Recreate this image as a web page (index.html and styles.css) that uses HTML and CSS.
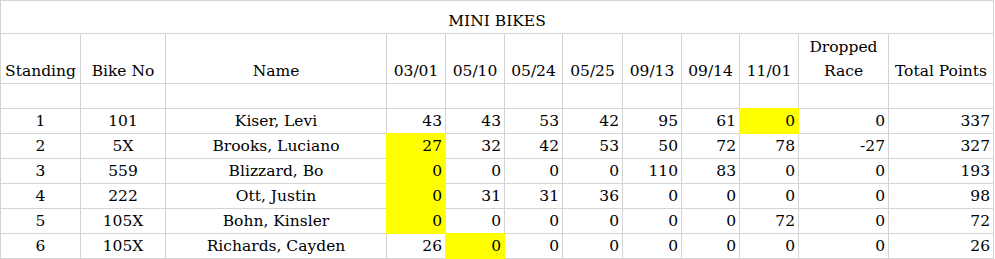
FILE: index.html
```html
<!DOCTYPE html>
<html>
<head>
<meta charset="utf-8">
<link rel="stylesheet" href="styles.css">
</head>
<body>
<div class="sheet">
  <div class="cell title">MINI BIKES</div>

  <div class="cell c">Standing</div>
  <div class="cell c">Bike No</div>
  <div class="cell c">Name</div>
  <div class="cell c">03/01</div>
  <div class="cell c">05/10</div>
  <div class="cell c">05/24</div>
  <div class="cell c">05/25</div>
  <div class="cell c">09/13</div>
  <div class="cell c">09/14</div>
  <div class="cell c">11/01</div>
  <div class="cell c">Dropped<br>Race</div>
  <div class="cell c">Total Points</div>

  <div class="cell"></div><div class="cell"></div><div class="cell"></div><div class="cell"></div>
  <div class="cell"></div><div class="cell"></div><div class="cell"></div><div class="cell"></div>
  <div class="cell"></div><div class="cell"></div><div class="cell"></div><div class="cell"></div>

  <div class="cell c">1</div><div class="cell c">101</div><div class="cell c">Kiser, Levi</div>
  <div class="cell r">43</div><div class="cell r">43</div><div class="cell r">53</div><div class="cell r">42</div>
  <div class="cell r">95</div><div class="cell r">61</div><div class="cell r hl">0</div>
  <div class="cell r">0</div><div class="cell r">337</div>

  <div class="cell c">2</div><div class="cell c">5X</div><div class="cell c">Brooks, Luciano</div>
  <div class="cell r hl">27</div><div class="cell r">32</div><div class="cell r">42</div><div class="cell r">53</div>
  <div class="cell r">50</div><div class="cell r">72</div><div class="cell r">78</div>
  <div class="cell r">-27</div><div class="cell r">327</div>

  <div class="cell c">3</div><div class="cell c">559</div><div class="cell c">Blizzard, Bo</div>
  <div class="cell r hl">0</div><div class="cell r">0</div><div class="cell r">0</div><div class="cell r">0</div>
  <div class="cell r">110</div><div class="cell r">83</div><div class="cell r">0</div>
  <div class="cell r">0</div><div class="cell r">193</div>

  <div class="cell c">4</div><div class="cell c">222</div><div class="cell c">Ott, Justin</div>
  <div class="cell r hl">0</div><div class="cell r">31</div><div class="cell r">31</div><div class="cell r">36</div>
  <div class="cell r">0</div><div class="cell r">0</div><div class="cell r">0</div>
  <div class="cell r">0</div><div class="cell r">98</div>

  <div class="cell c">5</div><div class="cell c">105X</div><div class="cell c">Bohn, Kinsler</div>
  <div class="cell r hl">0</div><div class="cell r">0</div><div class="cell r">0</div><div class="cell r">0</div>
  <div class="cell r">0</div><div class="cell r">0</div><div class="cell r">72</div>
  <div class="cell r">0</div><div class="cell r">72</div>

  <div class="cell c">6</div><div class="cell c">105X</div><div class="cell c">Richards, Cayden</div>
  <div class="cell r">26</div><div class="cell r hl">0</div><div class="cell r">0</div><div class="cell r">0</div>
  <div class="cell r">0</div><div class="cell r">0</div><div class="cell r">0</div>
  <div class="cell r">0</div><div class="cell r">26</div>
</div>
</body>
</html>
```
FILE: styles.css
```css
html, body {
  margin: 0;
  padding: 0;
  background: #ffffff;
}

.sheet {
  display: grid;
  width: max-content;
  grid-template-columns: 79px 84px 220px 58px 58px 57px 59px 58px 57px 58px 89px 104px;
  grid-template-rows: 32px 49px repeat(7, 24px);
  gap: 1px;
  padding: 1px;
  background: #d4d4d4;
  font-family: "DejaVu Serif", "Liberation Serif", serif;
  font-size: 15.5px;
  color: #000000;
}

.cell {
  background: #ffffff;
  line-height: 24px;
  display: flex;
  flex-direction: column;
  justify-content: flex-end;
  white-space: nowrap;
  overflow: visible;
}

.title {
  grid-column: 1 / -1;
  text-align: center;
}

.c {
  text-align: center;
}

.r {
  text-align: right;
  padding-right: 3px;
}

.hl {
  background: #ffff00;
  box-shadow: 0 0 0 1px #ffff00;
}
```
